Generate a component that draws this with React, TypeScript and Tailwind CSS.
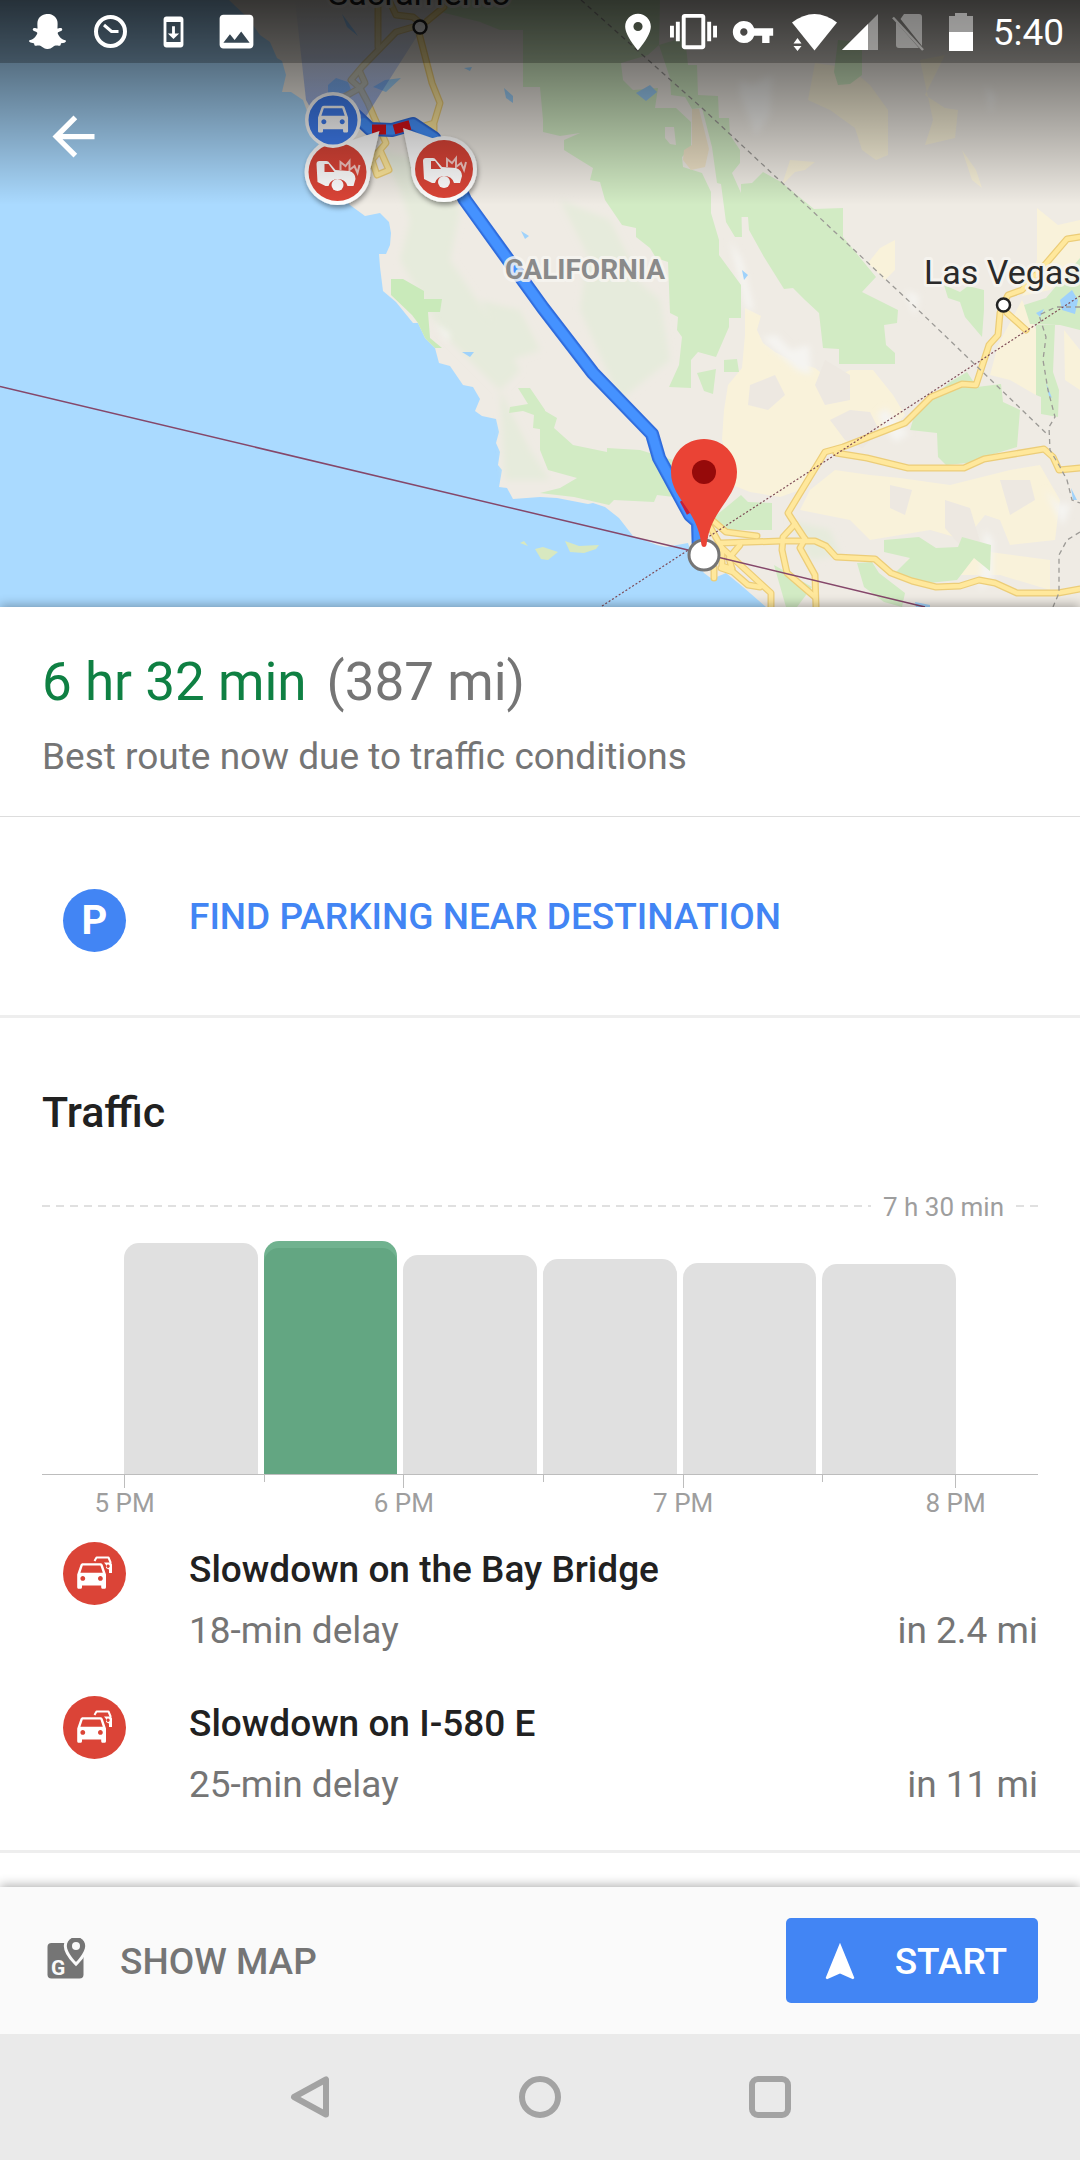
import {
  MdArrowBack,
  MdImage,
  MdLocationOn,
  MdNavigation,
  MdSystemUpdate,
  MdVibration,
  MdVpnKey,
} from "react-icons/md";
import { FaSnapchatGhost } from "react-icons/fa";

const CAR_PATH =
  "M18.92 6.01C18.72 5.42 18.16 5 17.5 5h-11c-.66 0-1.21.42-1.42 1.01L3 12v8c0 .55.45 1 1 1h1c.55 0 1-.45 1-1v-1h12v1c0 .55.45 1 1 1h1c.55 0 1-.45 1-1v-8l-2.08-5.99zM6.5 16c-.83 0-1.5-.67-1.5-1.5S5.67 13 6.5 13s1.5.67 1.5 1.5S7.33 16 6.5 16zm11 0c-.83 0-1.5-.67-1.5-1.5s.67-1.5 1.5-1.5 1.5.67 1.5 1.5-.67 1.5-1.5 1.5zM5 11l1.5-4.5h11L19 11H5z";

const ROUTE_PATH =
  "M350 110L370 129 392 130 413 124 434 138 465 200 543 308 593 373 652 434 659 458 690 515 698 522 699 555";

const parks = [
  "441,0 441,12 480,22 500,30 523,30 523,87 540,87 543,120 543,132 560,136 580,133 564,140 564,150 580,160 593,168 590,180 600,182 605,200 622,225 636,228 636,237 650,248 656,258 668,262 670,313 678,317 677,330 682,337 679,365 669,387 691,388 691,360 698,352 716,357 729,327 729,318 741,318 741,285 719,255 719,240 711,213 711,192 702,173 683,167 682,157 691,148 691,122 676,108 655,108 658,88 633,90 623,80 621,63 648,55 659,45 660,0",
  "659,45 685,37 688,65 697,65 698,95 718,96 719,118 729,118 730,135 740,150 740,163 732,173 741,193 742,237 735,237 726,222 721,184 717,183 712,147 702,108 692,109 685,97 671,95 670,78",
  "741,184 752,183 763,172 781,182 814,209 843,208 843,237 876,277 862,292 884,303 898,310 897,323 884,325 886,345 895,353 895,364 839,364 839,349 823,348 819,313 805,300 793,288 784,289 764,257 749,230 748,217 741,217",
  "838,40 862,42 862,75 850,84 838,85 834,72",
  "540,408 557,418 554,428 573,445 607,452 607,448 640,450 673,460 678,487 674,497 657,495 654,502 614,500 609,505 574,497 540,493 560,488 577,478 548,470 540,450",
  "510,407 528,404 518,388 530,388 545,410 545,430 533,428 534,415 523,411 509,413",
  "713,518 741,495 748,502 772,503 772,530 726,530",
  "950,382 967,372 977,387 1001,384 1003,402 1020,410 1017,447 984,457 967,463 946,465 938,457 937,433 910,430 915,413 933,397",
  "1036,325 1055,325 1053,372 1059,390 1058,417 1041,414 1041,397 1036,395",
  "1024,305 1046,298 1080,258 1080,330 1060,325 1030,324",
  "944,285 960,292 968,286 984,290 984,310 982,337 965,317 960,302 948,298",
  "884,540 919,537 936,548 958,547 962,537 991,545 990,571 974,558 957,580 929,583 895,573 910,558 884,552",
  "857,563 872,562 879,573 905,593 902,607 884,602 864,587",
  "774,565 812,587 797,607 786,607",
  "724,360 737,359 739,372 724,372",
  "697,373 716,369 713,394 704,391",
];

const deserts = [
  "745,308 761,316 757,330 763,343 775,352 795,362 815,368 830,380 850,370 873,370 893,395 905,415 893,428 850,445 825,450 800,490 780,497 750,492 735,486 722,440 724,410 728,385 742,368 745,335",
  "815,63 850,68 870,85 888,110 888,155 876,160 862,150 855,128 830,110 808,100",
  "920,60 945,55 925,95 945,108 958,110 955,138 925,145 933,120",
  "895,240 895,270 885,280 868,263 880,248",
  "1037,208 1058,225 1080,220 1080,262 1050,290 1022,296 1037,260",
  "790,160 815,162 805,170 795,172 782,185",
  "962,150 976,170 982,188 972,180",
  "835,470 870,475 900,478 950,485 1010,470 1040,465 1060,500 1055,540 1010,545 1000,520 985,515 965,540 930,530 870,540 850,520 800,510 810,490",
  "1022,300 1036,330 1036,395 1010,380 990,375 998,345",
  "905,560 975,550 1050,560 1050,590 1000,575 960,575",
  "1064,330 1080,350 1080,390 1065,380",
];

const wastes = [
  "850,410 870,412 880,432 862,448 845,440 830,420",
  "750,385 775,375 785,395 768,410 748,405",
  "945,500 970,508 982,548 960,545 945,528",
  "890,485 912,490 905,515 890,508",
  "825,360 850,375 850,400 825,405 815,385",
  "1000,480 1030,480 1035,500 1010,515",
];

const lakes = [
  "636,93 650,85 657,92 646,101",
  "342,14 354,30 358,36 347,27",
  "373,87 385,80 401,78 386,92 376,88",
  "504,88 513,96 513,103 506,98",
  "464,68 472,67 470,71",
  "328,85 336,78 348,82 352,92 328,94",
  "742,270 748,275 744,280",
  "462,352 474,352 470,357",
  "1060,300 1072,290 1078,300 1075,314 1062,310",
  "1036,313 1044,309 1040,317",
  "1046,383 1052,398 1049,396",
  "1071,488 1077,500 1073,500",
  "521,231 529,236 525,239",
];

const roads = [
  "1080,237 1067,239 1043,267 1022,290 1008,295 1003,305 1000,313 998,335 989,345 976,385 962,384 931,397 905,423 843,447 825,452 788,513 795,524 805,539",
  "1007,313 1026,330",
  "836,453 867,458 908,468 964,468 984,459 1044,449 1053,457 1059,470 1080,468",
  "721,543 781,541 815,541 826,546 836,557 875,559 891,573 912,581 936,587 960,586 979,580 995,583 1017,593 1058,593 1080,589",
  "795,524 783,537 782,550 787,573 815,597",
  "805,539 800,548 815,575 816,607",
  "712,520 726,532 757,536",
  "709,525 722,548 760,583 771,593 771,607",
  "721,568 733,572 748,585 760,587",
  "714,567 714,578",
  "740,545 729,558 732,569",
  "722,548 722,566 732,569",
  "419,33 432,83 440,103 434,123 420,127 434,125 434,140",
  "413,27 396,32 362,67 351,80 360,88 368,103 374,117 386,143 380,150 389,170 377,175 372,160 380,150",
  "378,0 378,47",
  "389,0 396,15 413,17 419,22",
  "444,7 427,21",
  "360,72 365,83 360,88 344,97",
];

const IncidentMarker = ({ x, y, tail }: { x: number; y: number; tail: string }) => (
  <g transform={`translate(${x} ${y})`}>
    <g filter="url(#marker-shadow)" fill="#fff">
      <path d={tail} />
      <circle r="33" />
    </g>
    <circle r="29" fill="#db4437" />
    <path
      fill="#fff"
      d="M-21-8q0-3 3-3h7q2 0 3 2l6 7 14 1q6 2 6 8l-2 7h-6a10 10 0 0 0-19 0h-3l-8-4z"
    />
    <path fill="#db4437" d="M-13-8h4l6 8h-10z" />
    <circle cx="0" cy="13" r="6" fill="#fff" />
    <path
      d="M3-2V-10l5 4 4-5v9l5-4 3 7 2-8"
      fill="none"
      stroke="#fff"
      strokeWidth="2"
      opacity="0.7"
    />
  </g>
);

const RouteMap = () => (
  <svg
    viewBox="0 0 1080 607"
    className="block w-full"
    role="img"
    aria-label="Route map through California"
  >
    <defs>
      <filter id="marker-shadow" x="-30%" y="-30%" width="160%" height="170%">
        <feDropShadow dx="1" dy="3" stdDeviation="2.5" floodOpacity="0.4" />
      </filter>
      <filter id="soft" x="-20%" y="-20%" width="140%" height="140%">
        <feGaussianBlur stdDeviation="3" />
      </filter>
      <linearGradient id="beam" x1="0" y1="0" x2="0" y2="1">
        <stop offset="0" stopColor="#4a7be8" stopOpacity="0" />
        <stop offset="1" stopColor="#3f6fe0" stopOpacity="0.55" />
      </linearGradient>
    </defs>
    <rect width="1080" height="607" fill="#aadaff" />
    <path
      fill="#efebe4"
      d="M229 0L248 18 260 35 270 42 277 58 282 61 286 75 282 92 291 92 303 100 314 130 330 180 350 205 365 216 380 213 389 222 391 233 390 245 386 254 379 254 380 267 383 291 396 302 413 323 418 323 425 338 435 348 439 363 450 366 463 385 473 387 480 399 475 411 482 416 496 419 499 432 496 443 500 452 498 465 502 470 499 487 507 488 513 499 540 497 557 498 588 504 593 503 605 507 619 518 633 536 657 545 666 547 688 543 693 557 704 573 712 579 726 573 743 587 766 607H1080V0Z"
    />
    <g fill="#e6ebdc" filter="url(#soft)">
      <path d="M380 150l40 10 40 50-10 50 40 60 30 50-20 20-60-60-40-70 10-40-10-30z" />
      <path d="M480 300l40 10 20 40-30 10zM590 240l70 60 10 60-50 40-40-90z" />
      <path d="M560 200l50 20 30 60-40 0zM500 390l30 60 20 30-45 0z" />
      <path d="M790 520l40 10 10 25-30 5z" />
    </g>
    <g fill="#f9f2da">
      {deserts.map((points) => (
        <polygon key={points} points={points} />
      ))}
    </g>
    <g fill="#ede8e1">
      {wastes.map((points) => (
        <polygon key={points} points={points} />
      ))}
    </g>
    <g fill="#f5f4f1" filter="url(#soft)">
      <path d="M762 338l14-3 15 15 18-5 2 30-14-5zM885 408l-8 8 18 26 14-8zM730 240l12 20 12 50-8-2zM740 80l12 5 20-10-2 40-14 20-16-40z" />
      <path d="M1045 490l14 14 12 0-8 22zM985 530l8 10 0 40-14 10zM905 290l14 6-4 20zM434 322l16 12-2 8zM985 85l10 10-4 20zM712 410l12 12z" />
    </g>
    <g fill="#d2ebc4">
      {parks.map((points) => (
        <polygon key={points} points={points} />
      ))}
    </g>
    <polygon
      fill="#c9eaba"
      points="391,279 403,279 424,291 424,299 442,299 440,312 428,312 430,338 442,348 435,348 425,338 418,323 412,315 391,295"
    />
    <path fill="#efebe4" d="M665 127l9 0 2 18-6-1-5-6z" />
    <path fill="#efe3c8" d="M692 109l7 0 10 40-4 18-14 3-8-10 1-10 8-5z" />
    <path
      fill="#d8e8c0"
      d="M520 543l4-2 4 5zM535 549l8-2 15 5-10 8-7-1zM565 541l14 5 20-1-3 4-12 4-14-1z"
    />
    <g fill="#9fd2fb">
      {lakes.map((points) => (
        <polygon key={points} points={points} />
      ))}
      <path d="M915 602l15 3v2h-14z" />
    </g>

    <g fill="none" strokeLinejoin="round" strokeLinecap="round">
      <g stroke="#eccd78" strokeWidth="7">
        {roads.map((points) => (
          <polyline key={points} points={points} />
        ))}
      </g>
      <g stroke="#ffe89c" strokeWidth="4.5">
        {roads.map((points) => (
          <polyline key={points} points={points} />
        ))}
      </g>
    </g>

    {/* state borders */}
    <g fill="none" stroke="#9c9a96" strokeWidth="1.3" strokeDasharray="5 4">
      <polyline points="581,0 702,108 911,303 1048,435" />
      <polyline points="1080,307 1056,307 1039,315 1046,337 1043,360 1048,390 1055,417 1049,427 1050,450 1060,467 1067,480 1072,500 1080,503" />
      <polyline points="1080,532 1067,540 1059,555 1059,593 1053,607" />
    </g>
    <path d="M0 386.500L688 550 925 607" fill="none" stroke="#85476a" strokeWidth="1.5" />
    <path d="M602 606L1080 296" stroke="#7d4a55" strokeWidth="1.2" strokeDasharray="2 2" />

    {/* route */}
    <g fill="none" strokeLinejoin="round">
      <path d={ROUTE_PATH} stroke="#2f6bdb" strokeWidth="14" />
      <path d={ROUTE_PATH} stroke="#3a7fee" strokeWidth="11" />
      <path d={ROUTE_PATH} stroke="#4592ff" strokeWidth="9" />
      <path d="M372 129.500H386M394 129.500L410 125" stroke="#d8121a" strokeWidth="10" />
      <path d="M683 500l7 13" stroke="#c5203a" strokeWidth="7" />
    </g>
    <path d="M295 0H440L365 118 320 125 306 100Z" fill="url(#beam)" />

    <g fill="#fff" stroke="#222" strokeWidth="2.5">
      <circle cx="420" cy="27" r="6.500" />
      <circle cx="1003.500" cy="305" r="6.500" />
    </g>
    <g
      fontFamily="Roboto, sans-serif"
      stroke="#f7f5f1"
      strokeOpacity="0.85"
      strokeWidth="6"
      strokeLinejoin="round"
      paintOrder="stroke"
    >
      <text x="328" y="5" fontSize="34" fill="#222">
        Sacramento
      </text>
      <text x="924" y="284" fontSize="34" fill="#2a2a2a">
        Las Vegas
      </text>
      <text x="505" y="279" fontSize="28" fontWeight="700" fill="#8a8a8a">
        CALIFORNIA
      </text>
    </g>

    <IncidentMarker x={337.5} y={172} tail="M-18-28L12-31 42-41 33-4Z" />
    <IncidentMarker x={444} y={169} tail="M18-28L-12-31-41-41-33-2Z" />
    <circle cx="333" cy="120" r="28" fill="#fff" />
    <circle cx="333" cy="120" r="24.500" fill="#3f7df0" />
    <path d={CAR_PATH} fill="#fff" transform="translate(313 97.500) scale(1.67)" />

    {/* destination */}
    <circle cx="704" cy="555" r="15" fill="#fff" stroke="#757575" strokeWidth="3" />
    <path
      fill="#ea4335"
      d="M704 439c-18.500 0-33 14.500-33 33 0 27 26 36 30.500 73q.5 2 2.500 2t2.500-2c4.500-37 30.500-46 30.500-73 0-18.500-14.500-33-33-33z"
    />
    <circle cx="704" cy="472" r="12" fill="#960a0a" />
  </svg>
);

const StatusBar = () => (
  <div className="flex h-[63px] items-center justify-between bg-black/25 pr-4 pl-[25px] text-white">
    <div className="flex items-center gap-[18px]">
      <FaSnapchatGhost className="w-[45px]" size={37} />
      <svg viewBox="0 0 45 45" className="size-[45px]" fill="none" stroke="currentColor">
        <circle cx="22.500" cy="22.500" r="14.500" strokeWidth="4" />
        <path d="M16 16l7.500 6.500h7" strokeWidth="3" />
      </svg>
      <MdSystemUpdate className="w-[45px]" size={34} />
      <MdImage size={45} />
    </div>
    <div className="flex items-center gap-[14px]">
      <div className="flex w-9 justify-center">
        <MdLocationOn size={44} className="shrink-0" />
      </div>
      <MdVibration size={47} />
      <MdVpnKey size={44} />
      <div className="ml-[3px] flex gap-[5px]">
        <svg viewBox="0 0 45 38" className="h-[38px] w-[45px]" fill="currentColor">
          <path d="M0 9.500Q22.500-7.500 45 9.500L22.500 37.500z" />
          <path d="M1.500 30.500l4-5.500 4 5.500zM1.500 33h8l-4 5z" />
        </svg>
        <svg viewBox="0 0 36 38" className="h-[38px] w-9" fill="currentColor">
          <path d="M36 1v36H0z" opacity="0.4" />
          <path d="M26 11v26H0z" />
        </svg>
      </div>
      <svg viewBox="0 0 34 38" className="h-[38px] w-[34px]" fill="currentColor" opacity="0.35">
        <path d="M12 1h15q3 0 3 3v29L8.500 6zM4 9l23 26H7q-3 0-3-3z" />
        <path d="M1 4.500L31 37" stroke="currentColor" strokeWidth="2.500" />
      </svg>
      <svg viewBox="0 0 24 38" className="ml-[9px] h-[38px] w-6" fill="currentColor">
        <path d="M6 0h12v3h6v16H0V3h6z" opacity="0.45" />
        <path d="M0 19h24v19H0z" />
      </svg>
      <time className="ml-[6px] pt-[2px] text-[37px] leading-[44px]">5:40</time>
    </div>
  </div>
);

const bars = [
  { height: 231, label: "5 PM" },
  { height: 233, label: "", current: true },
  { height: 219, label: "6 PM" },
  { height: 215, label: "" },
  { height: 211, label: "7 PM" },
  { height: 210, label: "", endLabel: "8 PM" },
];

const Tick = ({ label }: { label: string }) => (
  <div className="flex w-px flex-col items-center">
    <div className={`w-px bg-[#bdbdbd] ${label ? "h-[13px]" : "h-[7px]"}`} />
    <span className="text-[26px] leading-[30px] whitespace-nowrap">{label}</span>
  </div>
);

const Dashes = ({ className }: { className: string }) => (
  <div
    className={`h-[2px] bg-[repeating-linear-gradient(to_right,#e0e0e0_0_8px,transparent_8px_14px)] ${className}`}
  />
);

const TrafficChart = () => (
  <div className="mt-[53px] text-[#9e9e9e]">
    <div className="flex items-center">
      <Dashes className="flex-1" />
      <span className="px-3 pt-[2px] text-[26px] leading-[30px]">7 h 30 min</span>
      <Dashes className="w-[22px]" />
    </div>
    <div className="flex h-[253px] items-end border-b border-[#bdbdbd] pr-[76px] pl-[82px]">
      {bars.map((bar, idx) => (
        <div key={idx} className="flex-1 pr-[6px]">
          <div
            style={{ height: bar.height }}
            className={
              bar.current
                ? "overflow-hidden rounded-t-[15px] bg-[#70b28f] pt-[7px]"
                : "rounded-t-[15px] bg-[#e0e0e0]"
            }
          >
            {bar.current && <div className="h-full rounded-t-[15px] bg-[#63a682]" />}
          </div>
        </div>
      ))}
    </div>
    <div className="flex h-[43px] pr-[76px] pl-[82px]">
      {bars.map((bar, idx) => (
        <div key={idx} className="flex flex-1 justify-between pr-[6px]">
          <Tick label={bar.label} />
          {bar.endLabel && <Tick label={bar.endLabel} />}
        </div>
      ))}
    </div>
  </div>
);

const incidents = [
  { title: "Slowdown on the Bay Bridge", delay: "18-min delay", distance: "in 2.4 mi" },
  { title: "Slowdown on I-580 E", delay: "25-min delay", distance: "in 11 mi" },
];

const TrafficIcon = () => (
  <svg viewBox="0 0 63 63" className="size-[63px] shrink-0">
    <circle cx="31.500" cy="31.500" r="31.500" fill="#db4437" />
    <path d={CAR_PATH} fill="#fff" transform="translate(9.400 13.200) scale(1.6)" />
    <path
      d="M31.500 19l2-3.500h12l2.300 5.500"
      fill="none"
      stroke="#fff"
      strokeWidth="2"
      strokeLinejoin="round"
    />
    <path
      d="M41 20.500h7l1 2v8.500h-3v-3.500l-3-1.500v-3zM45 22.500a1.700 1.700 0 1 0 .1 0z"
      fill="#fff"
      fillRule="evenodd"
    />
  </svg>
);

const ShowMapIcon = () => (
  <svg viewBox="0 2 48 48" className="size-12">
    <rect x="5.500" y="7" width="36" height="35.500" rx="4" fill="#757575" />
    <path
      d="M34 1c-5.200 0-9.200 4-9.200 9 0 6.500 9.200 16 9.200 16s9.200-9.500 9.200-16c0-5-4-9-9.200-9z"
      fill="#757575"
      stroke="#fafafa"
      strokeWidth="6"
      paintOrder="stroke"
    />
    <circle cx="34" cy="10" r="4" fill="#fafafa" />
    <text
      x="9"
      y="38.500"
      fontSize="21"
      fontWeight="700"
      fontFamily="Roboto, sans-serif"
      fill="#fafafa"
    >
      G
    </text>
  </svg>
);

const NavigationBar = () => (
  <nav className="flex h-[126px] items-center justify-center gap-[188px] bg-[#eaeaea]">
    <button aria-label="Back">
      <svg viewBox="0 0 42 42" className="size-[42px]" fill="none" stroke="#a3a3a3">
        <path d="M37 3.500v35L5 21z" strokeWidth="6" strokeLinejoin="round" />
      </svg>
    </button>
    <button aria-label="Home" className="size-[42px] rounded-full border-[6px] border-[#a3a3a3]" />
    <button aria-label="Recent" className="size-[42px] rounded-[9px] border-[6px] border-[#a3a3a3]" />
  </nav>
);

export default function App() {
  return (
    <div className="flex min-h-screen flex-col bg-white font-['Roboto',sans-serif] text-[37px] leading-[44px] text-[#757575]">
      <header className="relative overflow-hidden">
        <RouteMap />
        <div className="absolute inset-x-0 top-0 h-[205px] bg-linear-to-b from-black/70 to-transparent">
          <StatusBar />
          <button aria-label="Back" className="mt-[42px] ml-[42px] text-white">
            <MdArrowBack size={63} />
          </button>
        </div>
      </header>

      <main className="relative flex flex-1 flex-col bg-white shadow-[0_-2px_10px_rgba(0,0,0,0.3)]">
        <section className="border-b border-[#dddddd] px-[42px] pt-[43px] pb-[37px]">
          <h1 className="flex gap-5 text-[53px] leading-[64px]">
            <span className="text-[#0f8043]">6 hr 32 min</span>
            <span>(387 mi)</span>
          </h1>
          <p className="mt-[21px]">Best route now due to traffic conditions</p>
        </section>

        <section className="border-b-[3px] border-[#eeeeee]">
          <a
            href="#parking"
            className="flex items-center gap-[63px] px-[63px] pt-[65px] pb-[63px] font-medium text-[#4285f4]"
          >
            <span className="mt-[7px] flex size-[63px] items-center justify-center rounded-full bg-[#4285f4] text-[40px] font-bold text-white">
              P
            </span>
            FIND PARKING NEAR DESTINATION
          </a>
        </section>

        <section className="border-b-[3px] border-[#eeeeee] px-[42px] pt-[69px]">
          <h2 className="text-[43px] leading-[50px] font-medium text-[#212121]">Traffic</h2>
          <TrafficChart />
          <ul className="mt-6">
            {incidents.map((incident) => (
              <li key={incident.title} className="flex gap-[63px] pb-[43px] pl-[21px]">
                <TrafficIcon />
                <div className="flex-1 pt-[6px]">
                  <h3 className="font-medium text-[#212121]">{incident.title}</h3>
                  <div className="mt-[17px] flex justify-between">
                    <span>{incident.delay}</span>
                    <span>{incident.distance}</span>
                  </div>
                </div>
              </li>
            ))}
          </ul>
        </section>
      </main>

      <footer className="relative shadow-[0_-2px_10px_rgba(0,0,0,0.3)]">
        <div className="flex h-[147px] items-center justify-between bg-[#fafafa] px-[42px] font-medium">
          <button className="flex items-center gap-[30px] pt-[2px]">
            <ShowMapIcon />
            SHOW MAP
          </button>
          <button className="flex h-[85px] items-center gap-8 rounded-[5px] bg-[#4285f4] px-[31px] pt-[2px] text-white">
            <MdNavigation size={46} />
            START
          </button>
        </div>
        <NavigationBar />
      </footer>
    </div>
  );
}
